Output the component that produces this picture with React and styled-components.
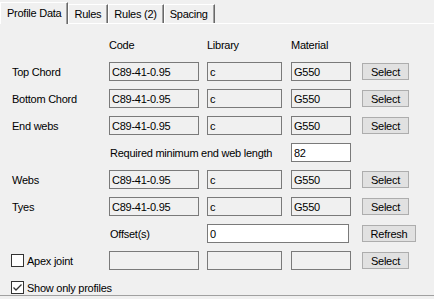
import React from 'react';
import styled, { createGlobalStyle } from 'styled-components';

const GlobalStyle = createGlobalStyle`
  body {
    margin: 0;
    background: #f0f0f0;
    font-family: "Liberation Sans", Arial, sans-serif;
    font-size: 11px;
    letter-spacing: -0.25px;
    color: #000;
  }
`;

const Window = styled.div`
  width: 434px;
  height: 299px;
  overflow: hidden;
  background: #f0f0f0;
`;

const TabStrip = styled.div`
  display: flex;
  align-items: flex-end;
  height: 23px;
  box-sizing: border-box;
  padding-top: 2px;
  position: relative;
  z-index: 1;
`;

const Tab = styled.div`
  box-sizing: border-box;
  height: ${props => (props.$active ? '22px' : '19px')};
  margin-bottom: ${props => (props.$active ? '-1px' : '0')};
  display: flex;
  align-items: center;
  padding: ${props => (props.$active ? '0 6px 2px 6px' : '0 6px 0 5px')};
  background: #f0f0f0;
  border-top: 1px solid #fff;
  border-left: 1px solid #fff;
  border-right: 1px solid #696969;
  box-shadow: inset -1px 0 0 #a0a0a0;
  white-space: nowrap;
`;

const Panel = styled.div`
  height: 273px;
  box-sizing: border-box;
  border-top: 1px solid #fff;
  border-bottom: 1px solid #a0a0a0;
  padding: 11px 0 0 11px;
  overflow: hidden;
`;

const FormGrid = styled.div`
  display: grid;
  grid-template-columns: 98px 98px 84px 71px auto;
  grid-auto-rows: 19px;
  row-gap: 8px;
  align-items: center;
`;

const Header = styled.div`
  grid-column: ${props => props.$col};
`;

const Label = styled.div`
  padding-left: 1px;
  grid-column: ${props => props.$col || 1} / span ${props => props.$span || 1};
  white-space: nowrap;
`;

const TextBox = styled.div`
  box-sizing: border-box;
  width: ${props => props.$w}px;
  height: 19px;
  grid-column: ${props => props.$col} / span ${props => props.$span || 1};
  border: 1px solid #7a7a7a;
  background: ${props => (props.$editable ? '#fff' : '#f0f0f0')};
  padding-left: 2px;
  display: flex;
  align-items: center;
  white-space: nowrap;
`;

const Button = styled.div`
  box-sizing: border-box;
  width: ${props => props.$w || 47}px;
  height: 17px;
  grid-column: 5;
  background: #e1e1e1;
  border: 1px solid #adadad;
  display: flex;
  align-items: center;
  justify-content: center;
`;

const CheckRow = styled.label`
  display: flex;
  align-items: center;
  gap: 3px;
  grid-column: ${props => props.$span ? '1 / -1' : '1'};
  white-space: nowrap;
`;

const Box = styled.span`
  box-sizing: border-box;
  width: 13px;
  height: 13px;
  border: 1px solid #333;
  background: #fff;
  display: flex;
  align-items: center;
  justify-content: center;
`;

const Checkbox = ({ checked, children, span }) => (
  <CheckRow $span={span}>
    <Box>
      {checked && (
        <svg width="11" height="11" viewBox="0 0 11 11">
          <polyline points="1.5,5.5 4,8 9.5,2.5" fill="none" stroke="#333" strokeWidth="1.3" />
        </svg>
      )}
    </Box>
    {children}
  </CheckRow>
);

const profiles = ['Top Chord', 'Bottom Chord', 'End webs'];
const moreProfiles = ['Webs', 'Tyes'];

const ProfileRow = ({ label }) => (
  <>
    <Label>{label}</Label>
    <TextBox $col={2} $w={90}>C89-41-0.95</TextBox>
    <TextBox $col={3} $w={75}>c</TextBox>
    <TextBox $col={4} $w={60}>G550</TextBox>
    <Button>Select</Button>
  </>
);

export default function App() {
  return (
    <Window>
      <GlobalStyle />
      <TabStrip>
        <Tab $active>Profile Data</Tab>
        <Tab>Rules</Tab>
        <Tab>Rules (2)</Tab>
        <Tab>Spacing</Tab>
      </TabStrip>
      <Panel>
        <FormGrid>
          <Header $col={2}>Code</Header>
          <Header $col={3}>Library</Header>
          <Header $col={4}>Material</Header>

          {profiles.map(p => <ProfileRow key={p} label={p} />)}

          <Label $col={2} $span={2}>Required minimum end web length</Label>
          <TextBox $col={4} $w={60} $editable>82</TextBox>

          {moreProfiles.map(p => <ProfileRow key={p} label={p} />)}

          <Label $col={2}>Offset(s)</Label>
          <TextBox $col={3} $span={2} $w={142} $editable>0</TextBox>
          <Button $w={54}>Refresh</Button>

          <Checkbox>Apex joint</Checkbox>
          <TextBox $col={2} $w={90} />
          <TextBox $col={3} $w={75} />
          <TextBox $col={4} $w={60} />
          <Button>Select</Button>

          <Checkbox checked span>Show only profiles</Checkbox>
        </FormGrid>
      </Panel>
    </Window>
  );
}
